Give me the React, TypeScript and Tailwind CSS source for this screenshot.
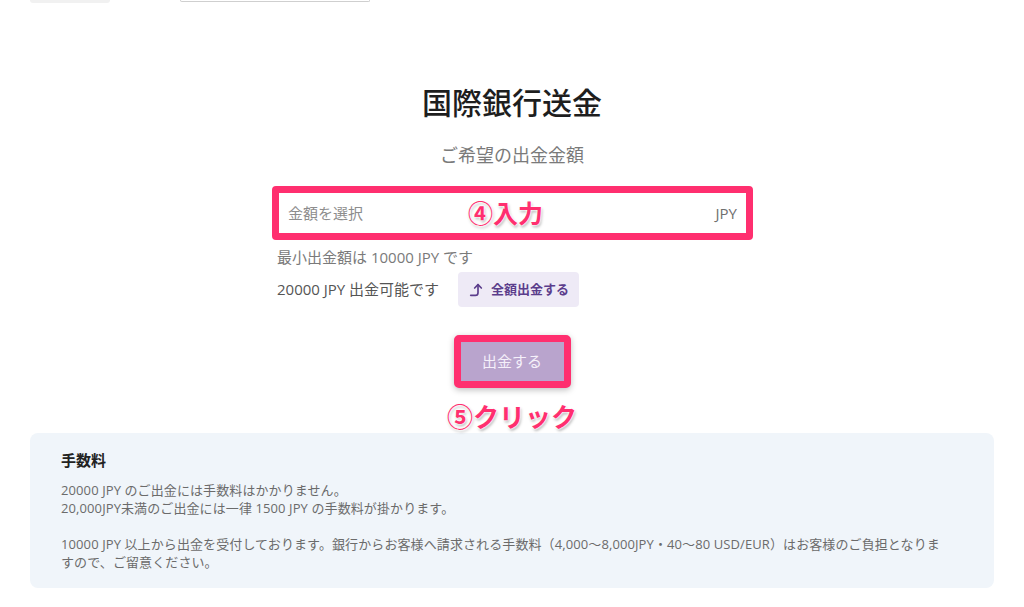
import React from "react";
import { CornerRightUp } from "lucide-react";

const font = { fontFamily: "'Open Sans', 'Noto Sans CJK JP', sans-serif" };

export default function App() {
  return (
    <div className="w-[1024px] h-[607px] bg-white overflow-hidden" style={font}>
      <div className="flex h-[3px] items-start">
        <div className="ml-[30px] w-[80px] h-[3px] rounded-b bg-[#f1f1f1]" />
        <div className="ml-[70px] w-[190px] h-[2px] rounded-b border-x border-b border-[#cfcfcf]" />
      </div>

      <h1 className="mt-[82px] text-center text-[30px] leading-[36px] text-[#1e1e1e] font-medium">
        国際銀行送金
      </h1>
      <p className="mt-[22px] text-center text-[18px] leading-[24px] text-[#7a7a7a]">
        ご希望の出金金額
      </p>

      <div className="mx-auto w-[470px] flex flex-col items-start">
        <div className="relative mt-[19px] -ml-[5px] w-[481px] h-[54px] rounded-[4px] border-[7px] border-[#ff2f6f] bg-white flex items-center justify-between px-[9px]">
          <span className="text-[15px] text-[#8d8d8d]">金額を選択</span>
          <span className="text-[15px] text-[#6f6f6f]">JPY</span>
          <span className="absolute left-[189px] top-1/2 -translate-y-1/2 text-[25px] leading-none font-bold text-[#ff2f6f] [text-shadow:0_0_2px_#fff,0_0_2px_#fff,0_0_3px_#fff,1px_2px_3px_rgba(0,0,0,0.35)]">
            ④入力
          </span>
        </div>

        <p className="mt-[7px] text-[15px] leading-[20px] text-[#7a7a7a]">
          最小出金額は 10000 JPY です
        </p>

        <div className="mt-[5px] flex items-center gap-[19px]">
          <span className="text-[15px] text-[#555]">20000 JPY 出金可能です</span>
          <button className="h-[35px] w-[121px] rounded-[4px] bg-[#eeeaf6] flex items-center justify-center gap-[7px] text-[13px] font-bold text-[#5b3d8c]">
            <CornerRightUp size={16} strokeWidth={2.5} />
            全額出金する
          </button>
        </div>
      </div>

      <div className="relative mx-auto mt-[28px] w-[117px] h-[53px] rounded-[5px] border-[7px] border-[#ff2f6f] bg-[#b9a4cd] flex items-center justify-center shadow-[0_2px_6px_rgba(0,0,0,0.25)]">
        <span className="text-[15px] text-[#f5f0fa]">出金する</span>
        <span className="absolute left-1/2 -translate-x-1/2 top-[62px] whitespace-nowrap text-[26px] leading-none font-bold text-[#ff2f6f] [text-shadow:0_0_2px_#fff,0_0_2px_#fff,0_0_3px_#fff,1px_2px_3px_rgba(0,0,0,0.35)]">
          ⑤クリック
        </span>
      </div>

      <div className="mx-[30px] mt-[45px] rounded-[8px] bg-[#f0f5fa] pl-[31px] pr-[30px] pt-[16px] pb-[17px]">
        <h2 className="text-[15px] leading-[22px] font-bold text-[#222]">手数料</h2>
        <div className="mt-[10px] text-[13px] leading-[18px] text-[#6b6b6b] tracking-[0.1px]">
          <p>20000 JPY のご出金には手数料はかかりません。</p>
          <p>20,000JPY未満のご出金には一律 1500 JPY の手数料が掛かります。</p>
          <p className="mt-[18px]">
            10000 JPY 以上から出金を受付しております。銀行からお客様へ請求される手数料（4,000〜8,000JPY・40〜80 USD/EUR）はお客様のご負担となりま
            <br />
            すので、ご留意ください。
          </p>
        </div>
      </div>
    </div>
  );
}
